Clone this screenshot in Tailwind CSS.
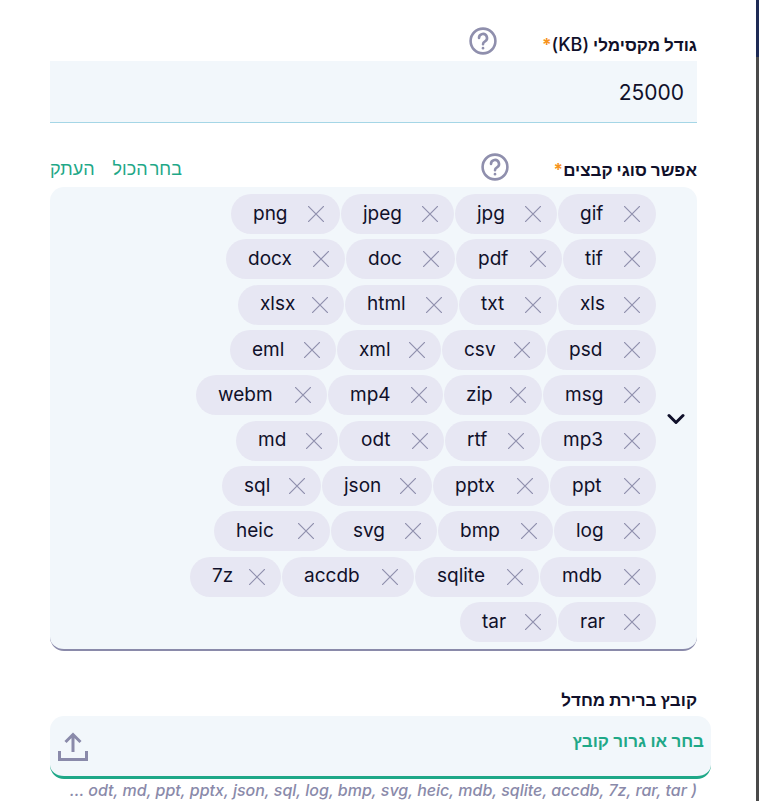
<!doctype html>
<html dir="rtl" lang="he">
<head>
<meta charset="utf-8">
<script src="https://cdn.jsdelivr.net/npm/@tailwindcss/browser@4"></script>
</head>
<body class="bg-white font-['Inter','Liberation_Sans',sans-serif] text-[#10102a] overflow-hidden">
<div class="relative w-[759px] h-[801px] overflow-hidden">
  <div class="absolute top-0 left-[756px] w-[3px] h-full bg-[#4a4a4a]"></div>
  <div class="absolute top-0 left-[756px] w-[3px] h-[57px] bg-[#1e2a55]"></div>

  <div class="flex flex-col pr-[62px] pl-[50px] w-[759px] pt-[26px]">
    <div class="flex items-center h-[35px] gap-[45px]">
      <span class="text-[17px] font-bold leading-none mt-[2px]">גודל מקסימלי <span class="font-medium text-[18px]">(KB)</span><span class="text-[#f7941d]">*</span></span>
      <svg class="w-[28px] h-[28px] text-[#8f8fad] mt-[-5px]" viewBox="0 0 28 28" fill="none" stroke="currentColor" stroke-width="2.6" stroke-linecap="round"><circle cx="14" cy="14" r="12.4"/><path d="M10 11a4 4 0 1 1 6 3.4c-1.3.8-2 1.5-2 2.8"/><path d="M14 21v.2"/></svg>
    </div>
    <div class="h-[62px] bg-[#f2f7fb] border-b border-[#a5d6e6] flex items-center pr-[13px] pt-[2px] text-[21px]">25000</div>

    <div class="flex items-center justify-between h-[35px] mt-[29px]">
      <div class="flex items-center gap-[45px]">
        <span class="text-[17px] font-bold leading-none mt-[2px]">אפשר סוגי קבצים<span class="text-[#f7941d]">*</span></span>
        <svg class="w-[28px] h-[28px] text-[#8f8fad] mt-[-5px]" viewBox="0 0 28 28" fill="none" stroke="currentColor" stroke-width="2.6" stroke-linecap="round"><circle cx="14" cy="14" r="12.4"/><path d="M10 11a4 4 0 1 1 6 3.4c-1.3.8-2 1.5-2 2.8"/><path d="M14 21v.2"/></svg>
      </div>
      <div class="flex gap-[18px] text-[18px] text-[#1fa888] [word-spacing:-3px] mt-[-3px]"><span>בחר הכול</span><span>העתק</span></div>
    </div>

    <div class="h-[464px] bg-[#f2f7fb] rounded-[14px] border-b-2 border-[#8a8aaa] flex items-center gap-[11px] pr-[12px] pl-[10px]">
      <svg class="w-[18px] h-[12px] shrink-0 text-[#10102a] mt-[1px]" viewBox="0 0 18 12" fill="none" stroke="currentColor" stroke-width="3" stroke-linecap="round" stroke-linejoin="round"><path d="M2 2.5 9 9.5 16 2.5"/></svg>
      <div class="flex flex-col gap-[5.33px] text-[19px]">
        <div class="flex gap-[1px]">
          <div dir="ltr" class="w-[98px] flex items-center h-10 rounded-full bg-[#e7e7f3] pl-[22px] pr-[16px]"><span>gif</span><svg class="ml-auto w-[16px] h-[16px] text-[#8f8fad]" viewBox="0 0 16 16" fill="none" stroke="currentColor" stroke-width="1.2"><path d="M0 0 16 16M16 0 0 16"/></svg></div>
          <div dir="ltr" class="w-[102px] flex items-center h-10 rounded-full bg-[#e7e7f3] pl-[22px] pr-[16px]"><span>jpg</span><svg class="ml-auto w-[16px] h-[16px] text-[#8f8fad]" viewBox="0 0 16 16" fill="none" stroke="currentColor" stroke-width="1.2"><path d="M0 0 16 16M16 0 0 16"/></svg></div>
          <div dir="ltr" class="w-[113px] flex items-center h-10 rounded-full bg-[#e7e7f3] pl-[22px] pr-[16px]"><span>jpeg</span><svg class="ml-auto w-[16px] h-[16px] text-[#8f8fad]" viewBox="0 0 16 16" fill="none" stroke="currentColor" stroke-width="1.2"><path d="M0 0 16 16M16 0 0 16"/></svg></div>
          <div dir="ltr" class="w-[109px] flex items-center h-10 rounded-full bg-[#e7e7f3] pl-[22px] pr-[16px]"><span>png</span><svg class="ml-auto w-[16px] h-[16px] text-[#8f8fad]" viewBox="0 0 16 16" fill="none" stroke="currentColor" stroke-width="1.2"><path d="M0 0 16 16M16 0 0 16"/></svg></div>
        </div>
        <div class="flex gap-[1px]">
          <div dir="ltr" class="w-[93px] flex items-center h-10 rounded-full bg-[#e7e7f3] pl-[22px] pr-[16px]"><span>tif</span><svg class="ml-auto w-[16px] h-[16px] text-[#8f8fad]" viewBox="0 0 16 16" fill="none" stroke="currentColor" stroke-width="1.2"><path d="M0 0 16 16M16 0 0 16"/></svg></div>
          <div dir="ltr" class="w-[106px] flex items-center h-10 rounded-full bg-[#e7e7f3] pl-[22px] pr-[16px]"><span>pdf</span><svg class="ml-auto w-[16px] h-[16px] text-[#8f8fad]" viewBox="0 0 16 16" fill="none" stroke="currentColor" stroke-width="1.2"><path d="M0 0 16 16M16 0 0 16"/></svg></div>
          <div dir="ltr" class="w-[109px] flex items-center h-10 rounded-full bg-[#e7e7f3] pl-[22px] pr-[16px]"><span>doc</span><svg class="ml-auto w-[16px] h-[16px] text-[#8f8fad]" viewBox="0 0 16 16" fill="none" stroke="currentColor" stroke-width="1.2"><path d="M0 0 16 16M16 0 0 16"/></svg></div>
          <div dir="ltr" class="w-[119px] flex items-center h-10 rounded-full bg-[#e7e7f3] pl-[22px] pr-[16px]"><span>docx</span><svg class="ml-auto w-[16px] h-[16px] text-[#8f8fad]" viewBox="0 0 16 16" fill="none" stroke="currentColor" stroke-width="1.2"><path d="M0 0 16 16M16 0 0 16"/></svg></div>
        </div>
        <div class="flex gap-[1px]">
          <div dir="ltr" class="w-[98px] flex items-center h-10 rounded-full bg-[#e7e7f3] pl-[22px] pr-[16px]"><span>xls</span><svg class="ml-auto w-[16px] h-[16px] text-[#8f8fad]" viewBox="0 0 16 16" fill="none" stroke="currentColor" stroke-width="1.2"><path d="M0 0 16 16M16 0 0 16"/></svg></div>
          <div dir="ltr" class="w-[98px] flex items-center h-10 rounded-full bg-[#e7e7f3] pl-[22px] pr-[16px]"><span>txt</span><svg class="ml-auto w-[16px] h-[16px] text-[#8f8fad]" viewBox="0 0 16 16" fill="none" stroke="currentColor" stroke-width="1.2"><path d="M0 0 16 16M16 0 0 16"/></svg></div>
          <div dir="ltr" class="w-[113px] flex items-center h-10 rounded-full bg-[#e7e7f3] pl-[22px] pr-[16px]"><span>html</span><svg class="ml-auto w-[16px] h-[16px] text-[#8f8fad]" viewBox="0 0 16 16" fill="none" stroke="currentColor" stroke-width="1.2"><path d="M0 0 16 16M16 0 0 16"/></svg></div>
          <div dir="ltr" class="w-[106px] flex items-center h-10 rounded-full bg-[#e7e7f3] pl-[22px] pr-[16px]"><span>xlsx</span><svg class="ml-auto w-[16px] h-[16px] text-[#8f8fad]" viewBox="0 0 16 16" fill="none" stroke="currentColor" stroke-width="1.2"><path d="M0 0 16 16M16 0 0 16"/></svg></div>
        </div>
        <div class="flex gap-[1px]">
          <div dir="ltr" class="w-[109px] flex items-center h-10 rounded-full bg-[#e7e7f3] pl-[22px] pr-[16px]"><span>psd</span><svg class="ml-auto w-[16px] h-[16px] text-[#8f8fad]" viewBox="0 0 16 16" fill="none" stroke="currentColor" stroke-width="1.2"><path d="M0 0 16 16M16 0 0 16"/></svg></div>
          <div dir="ltr" class="w-[104px] flex items-center h-10 rounded-full bg-[#e7e7f3] pl-[22px] pr-[16px]"><span>csv</span><svg class="ml-auto w-[16px] h-[16px] text-[#8f8fad]" viewBox="0 0 16 16" fill="none" stroke="currentColor" stroke-width="1.2"><path d="M0 0 16 16M16 0 0 16"/></svg></div>
          <div dir="ltr" class="w-[104px] flex items-center h-10 rounded-full bg-[#e7e7f3] pl-[22px] pr-[16px]"><span>xml</span><svg class="ml-auto w-[16px] h-[16px] text-[#8f8fad]" viewBox="0 0 16 16" fill="none" stroke="currentColor" stroke-width="1.2"><path d="M0 0 16 16M16 0 0 16"/></svg></div>
          <div dir="ltr" class="w-[106px] flex items-center h-10 rounded-full bg-[#e7e7f3] pl-[22px] pr-[16px]"><span>eml</span><svg class="ml-auto w-[16px] h-[16px] text-[#8f8fad]" viewBox="0 0 16 16" fill="none" stroke="currentColor" stroke-width="1.2"><path d="M0 0 16 16M16 0 0 16"/></svg></div>
        </div>
        <div class="flex gap-[1px]">
          <div dir="ltr" class="w-[113px] flex items-center h-10 rounded-full bg-[#e7e7f3] pl-[22px] pr-[16px]"><span>msg</span><svg class="ml-auto w-[16px] h-[16px] text-[#8f8fad]" viewBox="0 0 16 16" fill="none" stroke="currentColor" stroke-width="1.2"><path d="M0 0 16 16M16 0 0 16"/></svg></div>
          <div dir="ltr" class="w-[98px] flex items-center h-10 rounded-full bg-[#e7e7f3] pl-[22px] pr-[16px]"><span>zip</span><svg class="ml-auto w-[16px] h-[16px] text-[#8f8fad]" viewBox="0 0 16 16" fill="none" stroke="currentColor" stroke-width="1.2"><path d="M0 0 16 16M16 0 0 16"/></svg></div>
          <div dir="ltr" class="w-[115px] flex items-center h-10 rounded-full bg-[#e7e7f3] pl-[22px] pr-[16px]"><span>mp4</span><svg class="ml-auto w-[16px] h-[16px] text-[#8f8fad]" viewBox="0 0 16 16" fill="none" stroke="currentColor" stroke-width="1.2"><path d="M0 0 16 16M16 0 0 16"/></svg></div>
          <div dir="ltr" class="w-[131px] flex items-center h-10 rounded-full bg-[#e7e7f3] pl-[22px] pr-[16px]"><span>webm</span><svg class="ml-auto w-[16px] h-[16px] text-[#8f8fad]" viewBox="0 0 16 16" fill="none" stroke="currentColor" stroke-width="1.2"><path d="M0 0 16 16M16 0 0 16"/></svg></div>
        </div>
        <div class="flex gap-[1px]">
          <div dir="ltr" class="w-[115px] flex items-center h-10 rounded-full bg-[#e7e7f3] pl-[22px] pr-[16px]"><span>mp3</span><svg class="ml-auto w-[16px] h-[16px] text-[#8f8fad]" viewBox="0 0 16 16" fill="none" stroke="currentColor" stroke-width="1.2"><path d="M0 0 16 16M16 0 0 16"/></svg></div>
          <div dir="ltr" class="w-[95px] flex items-center h-10 rounded-full bg-[#e7e7f3] pl-[22px] pr-[16px]"><span>rtf</span><svg class="ml-auto w-[16px] h-[16px] text-[#8f8fad]" viewBox="0 0 16 16" fill="none" stroke="currentColor" stroke-width="1.2"><path d="M0 0 16 16M16 0 0 16"/></svg></div>
          <div dir="ltr" class="w-[105px] flex items-center h-10 rounded-full bg-[#e7e7f3] pl-[22px] pr-[16px]"><span>odt</span><svg class="ml-auto w-[16px] h-[16px] text-[#8f8fad]" viewBox="0 0 16 16" fill="none" stroke="currentColor" stroke-width="1.2"><path d="M0 0 16 16M16 0 0 16"/></svg></div>
          <div dir="ltr" class="w-[102px] flex items-center h-10 rounded-full bg-[#e7e7f3] pl-[22px] pr-[16px]"><span>md</span><svg class="ml-auto w-[16px] h-[16px] text-[#8f8fad]" viewBox="0 0 16 16" fill="none" stroke="currentColor" stroke-width="1.2"><path d="M0 0 16 16M16 0 0 16"/></svg></div>
        </div>
        <div class="flex gap-[1px]">
          <div dir="ltr" class="w-[106px] flex items-center h-10 rounded-full bg-[#e7e7f3] pl-[22px] pr-[16px]"><span>ppt</span><svg class="ml-auto w-[16px] h-[16px] text-[#8f8fad]" viewBox="0 0 16 16" fill="none" stroke="currentColor" stroke-width="1.2"><path d="M0 0 16 16M16 0 0 16"/></svg></div>
          <div dir="ltr" class="w-[116px] flex items-center h-10 rounded-full bg-[#e7e7f3] pl-[22px] pr-[16px]"><span>pptx</span><svg class="ml-auto w-[16px] h-[16px] text-[#8f8fad]" viewBox="0 0 16 16" fill="none" stroke="currentColor" stroke-width="1.2"><path d="M0 0 16 16M16 0 0 16"/></svg></div>
          <div dir="ltr" class="w-[110px] flex items-center h-10 rounded-full bg-[#e7e7f3] pl-[22px] pr-[16px]"><span>json</span><svg class="ml-auto w-[16px] h-[16px] text-[#8f8fad]" viewBox="0 0 16 16" fill="none" stroke="currentColor" stroke-width="1.2"><path d="M0 0 16 16M16 0 0 16"/></svg></div>
          <div dir="ltr" class="w-[99px] flex items-center h-10 rounded-full bg-[#e7e7f3] pl-[22px] pr-[16px]"><span>sql</span><svg class="ml-auto w-[16px] h-[16px] text-[#8f8fad]" viewBox="0 0 16 16" fill="none" stroke="currentColor" stroke-width="1.2"><path d="M0 0 16 16M16 0 0 16"/></svg></div>
        </div>
        <div class="flex gap-[1px]">
          <div dir="ltr" class="w-[102px] flex items-center h-10 rounded-full bg-[#e7e7f3] pl-[22px] pr-[16px]"><span>log</span><svg class="ml-auto w-[16px] h-[16px] text-[#8f8fad]" viewBox="0 0 16 16" fill="none" stroke="currentColor" stroke-width="1.2"><path d="M0 0 16 16M16 0 0 16"/></svg></div>
          <div dir="ltr" class="w-[115px] flex items-center h-10 rounded-full bg-[#e7e7f3] pl-[22px] pr-[16px]"><span>bmp</span><svg class="ml-auto w-[16px] h-[16px] text-[#8f8fad]" viewBox="0 0 16 16" fill="none" stroke="currentColor" stroke-width="1.2"><path d="M0 0 16 16M16 0 0 16"/></svg></div>
          <div dir="ltr" class="w-[106px] flex items-center h-10 rounded-full bg-[#e7e7f3] pl-[22px] pr-[16px]"><span>svg</span><svg class="ml-auto w-[16px] h-[16px] text-[#8f8fad]" viewBox="0 0 16 16" fill="none" stroke="currentColor" stroke-width="1.2"><path d="M0 0 16 16M16 0 0 16"/></svg></div>
          <div dir="ltr" class="w-[116px] flex items-center h-10 rounded-full bg-[#e7e7f3] pl-[22px] pr-[16px]"><span>heic</span><svg class="ml-auto w-[16px] h-[16px] text-[#8f8fad]" viewBox="0 0 16 16" fill="none" stroke="currentColor" stroke-width="1.2"><path d="M0 0 16 16M16 0 0 16"/></svg></div>
        </div>
        <div class="flex gap-[1px]">
          <div dir="ltr" class="w-[116px] flex items-center h-10 rounded-full bg-[#e7e7f3] pl-[22px] pr-[16px]"><span>mdb</span><svg class="ml-auto w-[16px] h-[16px] text-[#8f8fad]" viewBox="0 0 16 16" fill="none" stroke="currentColor" stroke-width="1.2"><path d="M0 0 16 16M16 0 0 16"/></svg></div>
          <div dir="ltr" class="w-[124px] flex items-center h-10 rounded-full bg-[#e7e7f3] pl-[22px] pr-[16px]"><span>sqlite</span><svg class="ml-auto w-[16px] h-[16px] text-[#8f8fad]" viewBox="0 0 16 16" fill="none" stroke="currentColor" stroke-width="1.2"><path d="M0 0 16 16M16 0 0 16"/></svg></div>
          <div dir="ltr" class="w-[132px] flex items-center h-10 rounded-full bg-[#e7e7f3] pl-[22px] pr-[16px]"><span>accdb</span><svg class="ml-auto w-[16px] h-[16px] text-[#8f8fad]" viewBox="0 0 16 16" fill="none" stroke="currentColor" stroke-width="1.2"><path d="M0 0 16 16M16 0 0 16"/></svg></div>
          <div dir="ltr" class="w-[91px] flex items-center h-10 rounded-full bg-[#e7e7f3] pl-[22px] pr-[16px]"><span>7z</span><svg class="ml-auto w-[16px] h-[16px] text-[#8f8fad]" viewBox="0 0 16 16" fill="none" stroke="currentColor" stroke-width="1.2"><path d="M0 0 16 16M16 0 0 16"/></svg></div>
        </div>
        <div class="flex gap-[1px]">
          <div dir="ltr" class="w-[98px] flex items-center h-10 rounded-full bg-[#e7e7f3] pl-[22px] pr-[16px]"><span>rar</span><svg class="ml-auto w-[16px] h-[16px] text-[#8f8fad]" viewBox="0 0 16 16" fill="none" stroke="currentColor" stroke-width="1.2"><path d="M0 0 16 16M16 0 0 16"/></svg></div>
          <div dir="ltr" class="w-[97px] flex items-center h-10 rounded-full bg-[#e7e7f3] pl-[22px] pr-[16px]"><span>tar</span><svg class="ml-auto w-[16px] h-[16px] text-[#8f8fad]" viewBox="0 0 16 16" fill="none" stroke="currentColor" stroke-width="1.2"><path d="M0 0 16 16M16 0 0 16"/></svg></div>
        </div>
      </div>
    </div>

    <div class="mt-[34px] h-[31px] flex items-center text-[17px] font-bold leading-none">קובץ ברירת מחדל</div>
    <div class="w-[661px] mr-[-14px] h-[63px] bg-[#f2f7fb] rounded-[14px] border-b-[3px] border-[#1fa888] flex justify-between pr-[7px] pl-[8px]">
      <span class="text-[17px] font-semibold text-[#1fa888] mt-[13px] leading-[24px]">בחר או גרור קובץ</span>
      <svg class="w-[30px] h-[30px] text-[#8a8aaa] mt-[16px]" viewBox="0 0 30 30" fill="none" stroke="currentColor" stroke-width="3" stroke-linejoin="miter"><path d="M15 20V3M7.5 10 15 2.5 22.5 10"/><path d="M1.5 19v8.5h27V19"/></svg>
    </div>
    <div dir="ltr" class="text-right text-[16px] italic font-medium text-[#8a8aaa] leading-[24px] mt-[-1px] whitespace-nowrap">… odt, md, ppt, pptx, json, sql, log, bmp, svg, heic, mdb, sqlite, accdb, 7z, rar, tar )</div>
  </div>
</div>
</body>
</html>
